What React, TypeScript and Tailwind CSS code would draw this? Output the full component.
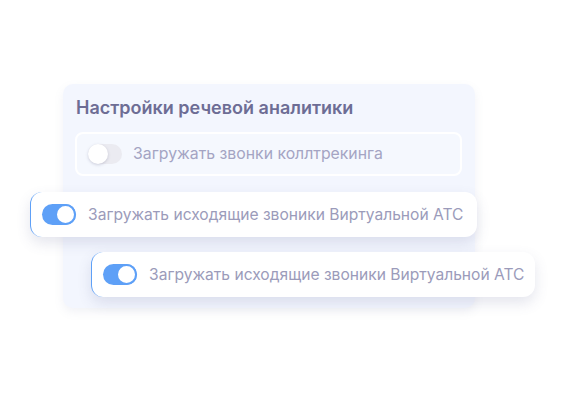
import React from "react";

function Toggle({ on }: { on: boolean }) {
  if (on) {
    return (
      <div className="relative w-[34px] h-[21px] rounded-full bg-[#5ea0f7] shrink-0">
        <div className="absolute right-0 top-0 w-[21px] h-[21px] rounded-full bg-white border-[2px] border-[#5ea0f7]" />
      </div>
    );
  }
  return (
    <div className="relative w-[34px] h-[20px] rounded-full bg-[#ebebf1] shrink-0">
      <div className="absolute left-0 top-0 w-[20px] h-[20px] rounded-full bg-white shadow-[0_1px_3px_rgba(80,80,120,0.25)]" />
    </div>
  );
}

function Card({ className }: { className: string }) {
  return (
    <div
      className={
        "flex items-center gap-[12px] h-[45px] pl-[11px] rounded-[12px] bg-white border-l-[1.5px] border-[#5ea0f7] shadow-[0_6px_14px_rgba(90,95,140,0.16)] " +
        className
      }
    >
      <Toggle on />
      <span className="text-[15.6px] text-[#9b9bba] whitespace-nowrap">
        Загружать исходящие звоники Виртуальной АТС
      </span>
    </div>
  );
}

export default function App() {
  return (
    <div
      className="w-[567px] h-[400px] bg-white overflow-hidden"
      style={{ fontFamily: "Inter, 'Noto Sans', sans-serif" }}
    >
      <div className="ml-[63px] mt-[84px] w-[412px] h-[224px] rounded-[10px] bg-[#f3f6fe] shadow-[0_4px_10px_rgba(120,130,170,0.10)] pt-[10px]">
        <div className="pl-[13px] h-[26px] flex items-center text-[18px] font-semibold text-[#6d6d95]">
          Настройки речевой аналитики
        </div>
        <div className="ml-[12px] mt-[12px] w-[387px] h-[44px] rounded-[8px] border-2 border-white bg-[#f5f8fe] flex items-center gap-[11px] pl-[11px]">
          <Toggle on={false} />
          <span className="text-[15.8px] text-[#a4a4c3] whitespace-nowrap">
            Загружать звонки коллтрекинга
          </span>
        </div>
        <Card className="ml-[-33px] mt-[16px] w-[447px]" />
        <Card className="ml-[28px] mt-[15px] w-[444px]" />
      </div>
    </div>
  );
}
